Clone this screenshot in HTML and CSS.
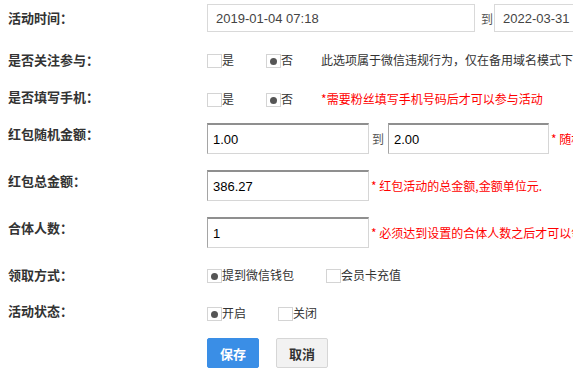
FILE: index.html
```html
<!DOCTYPE html>
<html lang="zh-CN">
<head>
<meta charset="utf-8">
<title>活动设置</title>
<link rel="stylesheet" href="styles.css">
</head>
<body>
<div class="form">
  <div class="row r1">
    <div class="label">活动时间：</div>
    <div class="ctl">
      <input class="field date" type="text" value="2019-01-04 07:18">
      <span class="sep sep-date">到</span>
      <input class="field date" type="text" value="2022-03-31 23:59">
    </div>
  </div>

  <div class="row r2">
    <div class="label lift-s">是否关注参与：</div>
    <div class="ctl top">
      <div class="opts">
        <span class="opt"><span class="box"></span>是</span>
        <span class="opt"><span class="box on"></span>否</span>
      </div>
      <span class="note">此选项属于微信违规行为，仅在备用域名模式下有效</span>
    </div>
  </div>

  <div class="row r3">
    <div class="label lift-m">是否填写手机：</div>
    <div class="ctl top">
      <div class="opts">
        <span class="opt"><span class="box"></span>是</span>
        <span class="opt"><span class="box on"></span>否</span>
      </div>
      <span class="note red">*需要粉丝填写手机号码后才可以参与活动</span>
    </div>
  </div>

  <div class="row r4 tall">
    <div class="label lift-l">红包随机金额：</div>
    <div class="ctl">
      <input class="field num" type="text" value="1.00">
      <span class="sep sep-num">到</span>
      <input class="field num num2" type="text" value="2.00">
      <span class="hint">* 随机红包的金额范围</span>
    </div>
  </div>

  <div class="row r5 tall">
    <div class="label lift-l">红包总金额：</div>
    <div class="ctl">
      <input class="field num" type="text" value="386.27">
      <span class="hint">* 红包活动的总金额,金额单位元.</span>
    </div>
  </div>

  <div class="row r6 tall">
    <div class="label lift-l">合体人数：</div>
    <div class="ctl">
      <input class="field num" type="text" value="1">
      <span class="hint">* 必须达到设置的合体人数之后才可以领取红包</span>
    </div>
  </div>

  <div class="row r7">
    <div class="label lift-s">领取方式：</div>
    <div class="ctl top">
      <div class="opts">
        <span class="opt"><span class="box on"></span>提到微信钱包</span>
        <span class="opt"><span class="box"></span>会员卡充值</span>
      </div>
    </div>
  </div>

  <div class="row r8">
    <div class="label lift-m">活动状态：</div>
    <div class="ctl top">
      <div class="opts">
        <span class="opt"><span class="box on"></span>开启</span>
        <span class="opt"><span class="box"></span>关闭</span>
      </div>
    </div>
  </div>

  <div class="row r9">
    <div class="label"></div>
    <div class="ctl buttons">
      <button class="btn primary" type="button">保存</button>
      <button class="btn" type="button">取消</button>
    </div>
  </div>
</div>
</body>
</html>
```

FILE: styles.css
```css
html, body {
  margin: 0;
  padding: 0;
  overflow: hidden;
  background: #fff;
}

body {
  font-family: "Liberation Sans", "Noto Sans CJK SC", sans-serif;
  color: #333;
}

.form {
  padding-left: 8px;
  width: 1000px;
}

.row {
  display: flex;
  align-items: center;
}

.label {
  width: 199px;
  flex-shrink: 0;
  font-family: "Noto Sans CJK SC", sans-serif;
  font-weight: bold;
  font-size: 13px;
  line-height: 16px;
  color: #333;
  white-space: nowrap;
}

.lift-s { margin-bottom: 3px; }
.lift-m { margin-bottom: 6px; }
.lift-l { margin-bottom: 9px; }

.ctl {
  display: flex;
  align-items: center;
  white-space: nowrap;
}

.ctl.top {
  align-self: flex-start;
  align-items: flex-start;
}

.r1 { margin-top: 4px; height: 28px; }
.r2 { margin-top: 22px; height: 14px; }
.r3 { margin-top: 25px; height: 14px; }
.r4 { margin-top: 16px; height: 31px; }
.r5 { margin-top: 16px; height: 31px; }
.r6 { margin-top: 16px; height: 31px; }
.r7 { margin-top: 21px; height: 14px; }
.r8 { margin-top: 24px; height: 14px; }
.r9 { margin-top: 17px; height: 30px; }

.field {
  box-sizing: border-box;
  margin: 0;
  font-family: "Liberation Sans", sans-serif;
  font-size: 13px;
  outline: none;
  background: #fff;
}

.date {
  width: 268px;
  height: 28px;
  border: 1px solid #d9d9d9;
  padding: 0 8px;
  color: #444;
  flex-shrink: 0;
}

.num {
  width: 162px;
  height: 31px;
  border-style: solid;
  border-width: 2px 1px 1px 1px;
  border-color: #8f8f8f #d6d6d6 #d6d6d6 #a5a5a5;
  padding: 0 5px;
  color: #000;
  flex-shrink: 0;
}

.num2 { width: 161px; }

.sep {
  font-family: "Noto Sans CJK SC", sans-serif;
  font-size: 12px;
  color: #555;
  flex-shrink: 0;
}

.sep-date { margin: 0 1px 0 6px; }
.sep-num { margin: 0 4px 0 3px; }

.opts {
  display: flex;
  gap: 32px;
}

.opt {
  display: flex;
  align-items: flex-start;
  font-family: "Noto Sans CJK SC", sans-serif;
  font-size: 12px;
  line-height: 12px;
  color: #333;
}

.box {
  box-sizing: border-box;
  width: 15px;
  height: 14px;
  border: 1px solid #d4d4d4;
  background: #fff;
  display: flex;
  align-items: center;
  justify-content: center;
  padding-top: 1px;
}

.box.on::after {
  content: "";
  width: 7px;
  height: 7px;
  border-radius: 50%;
  background: #555;
}

.note {
  margin-left: 28px;
  font-family: "Noto Sans CJK SC", sans-serif;
  font-size: 12px;
  line-height: 12px;
  color: #333;
}

.note.red { color: #f00; }

.hint {
  margin-left: 2px;
  font-family: "Noto Sans CJK SC", sans-serif;
  font-size: 12px;
  color: #f00;
}

.buttons { gap: 17px; }

.btn {
  box-sizing: border-box;
  width: 52px;
  height: 30px;
  margin: 0;
  padding: 0;
  font-family: "Noto Sans CJK SC", sans-serif;
  font-weight: bold;
  font-size: 13px;
  color: #333;
  background: #f2f2f2;
  border: 1px solid #d6d6d6;
  border-radius: 2px;
}

.btn.primary {
  background: #3a8ee6;
  border-color: #3a8ee6;
  color: #fff;
}
```
